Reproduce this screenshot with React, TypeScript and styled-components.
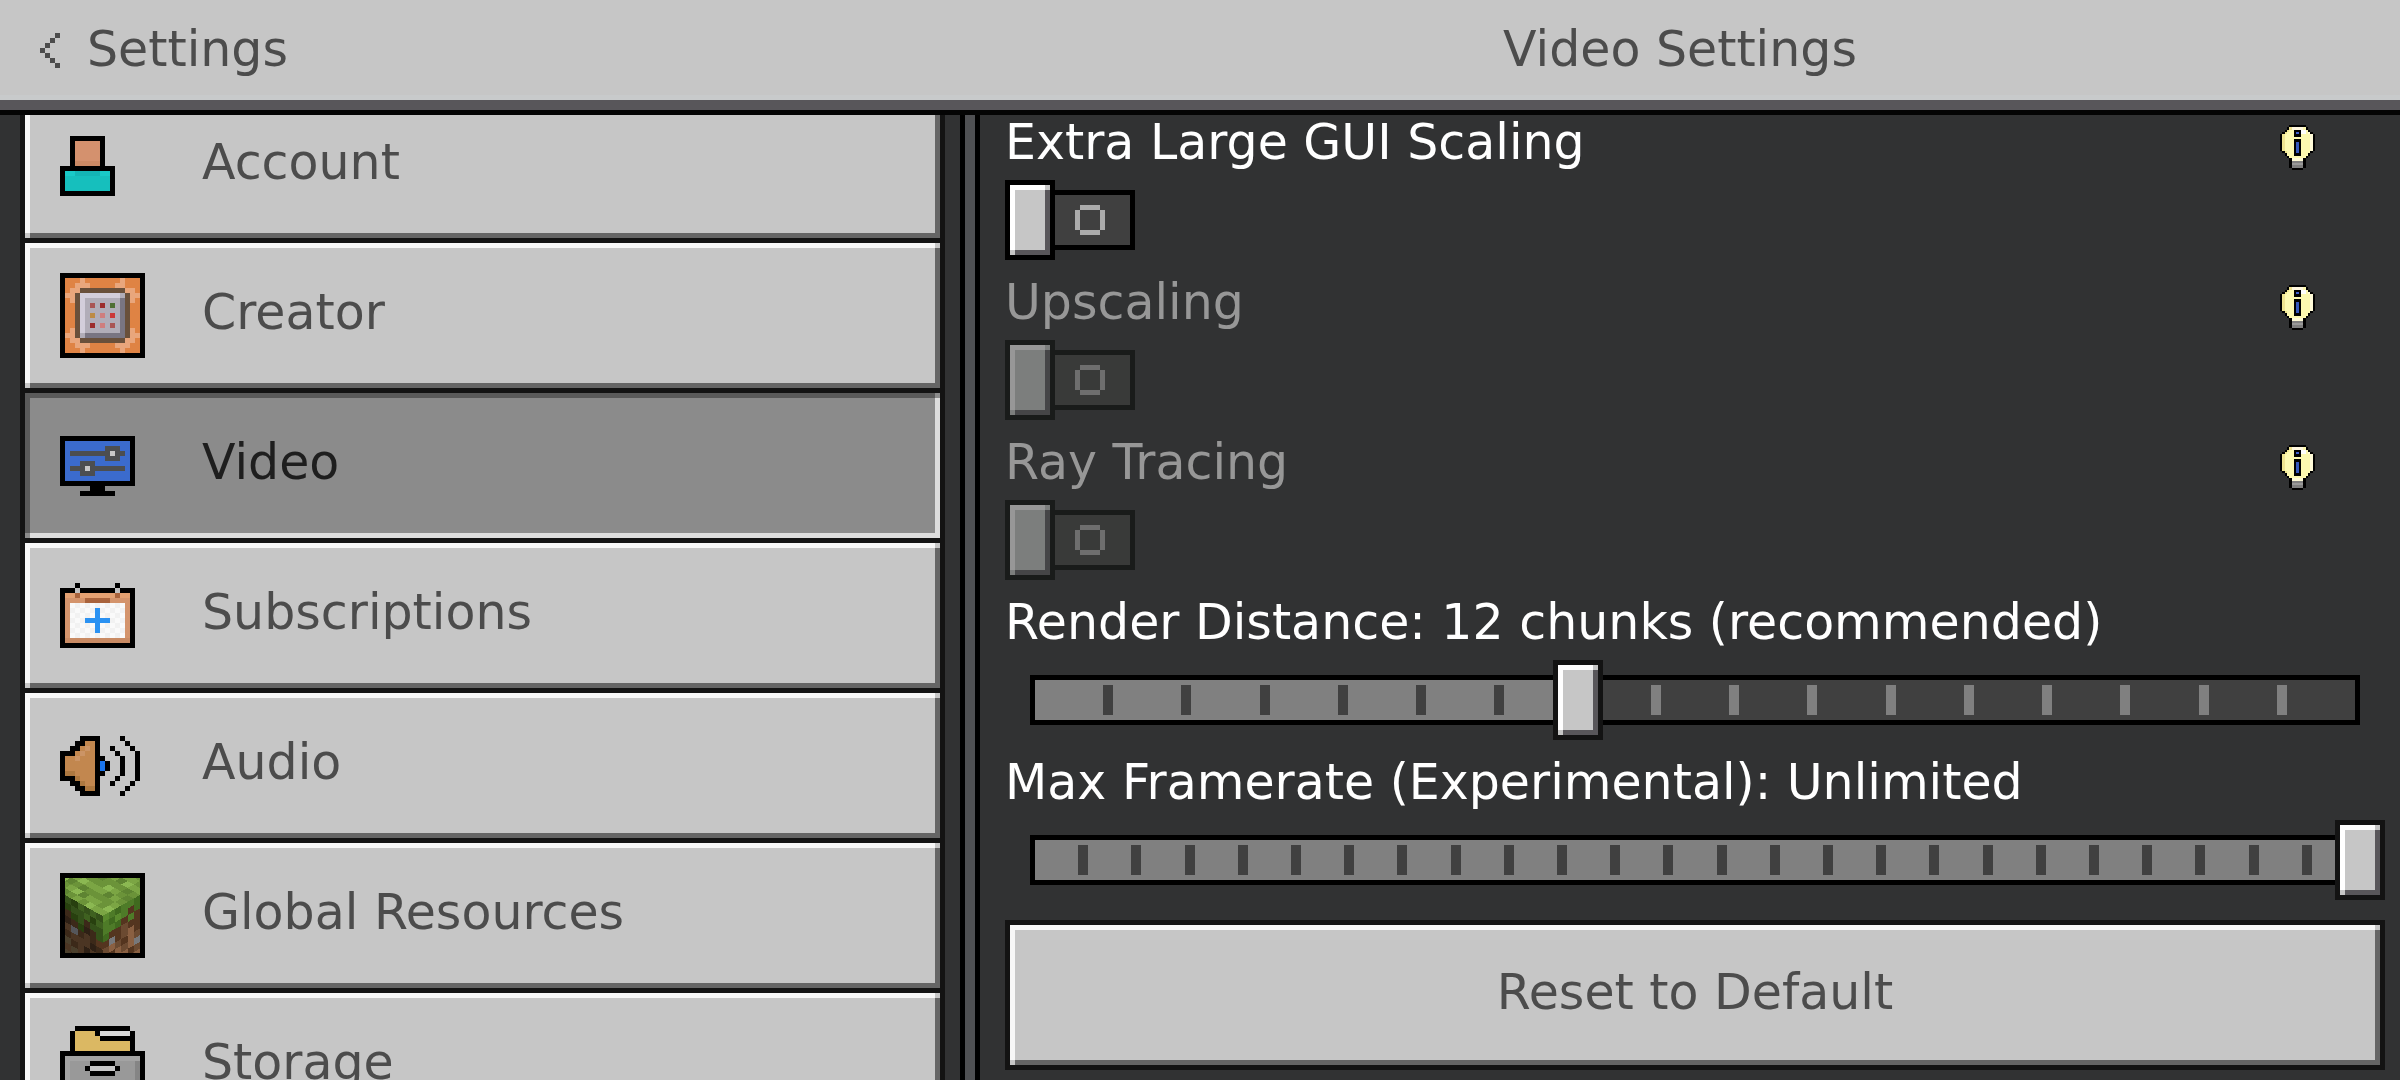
import React, { useLayoutEffect, useRef, useState } from "react";
import styled, { createGlobalStyle, css } from "styled-components";

const GlobalStyle = createGlobalStyle`
  *, *::before, *::after { box-sizing: border-box; }
  body { margin: 0; background: #313233; }
  body, button, input {
    font-family: "DejaVu Sans", Verdana, sans-serif;
    font-size: 49px;
    line-height: 50px;
  }
`;

/* A raised pixel edge: light on the top and left, dark on the bottom and right. */
const bevel = (light: string, face: string, dark: string, corner: string = face) => css`
  background:
    linear-gradient(${corner}, ${corner}) top right / 5px 5px no-repeat,
    linear-gradient(${corner}, ${corner}) bottom left / 5px 5px no-repeat,
    linear-gradient(${light}, ${light}) top / 100% 5px no-repeat,
    linear-gradient(${light}, ${light}) left / 5px 100% no-repeat,
    linear-gradient(${dark}, ${dark}) bottom / 100% 5px no-repeat,
    linear-gradient(${dark}, ${dark}) right / 5px 100% no-repeat,
    ${face};
  background-clip: padding-box;
`;

const Screen = styled.div`
  display: flex;
  flex-direction: column;
  height: 100vh;
  overflow: hidden;
  background: #313233;
`;

const Header = styled.header`
  display: grid;
  grid-template-columns: 2fr 3fr;
  align-items: center;
  flex: none;
  height: 115px;
  padding-bottom: 15px;
  color: #4c4c4c;
  background: linear-gradient(#c6c6c6 0 95px, #c8cacb 95px 100px, #58565a 100px 110px, #040404 110px);
`;

const BackButton = styled.button`
  display: flex;
  align-items: center;
  justify-self: start;
  gap: 27px;
  padding: 0 40px;
  border: 0;
  background: none;
  color: inherit;
`;

const Title = styled.h1`
  margin: 0;
  font-size: 49px;
  font-weight: 400;
  text-align: center;
`;

const Body = styled.div`
  display: grid;
  grid-template-columns: 2fr 3fr;
  flex: 1;
  min-height: 0;
`;

const Sidebar = styled.nav`
  min-height: 0;
  padding: 0 15px 0 20px;
`;

const NavList = styled.div`
  display: flex;
  flex-direction: column;
  gap: 5px;
  height: 100%;
  padding: 5px;
  overflow-y: auto;
  scrollbar-width: none;
  background: #131313;
`;

const NavButton = styled.button<{ $active: boolean }>`
  display: flex;
  align-items: center;
  flex: none;
  gap: 52px;
  height: 145px;
  padding: 0 35px;
  border: 0;
  text-align: left;
  color: ${(p) => (p.$active ? "#1e1e1e" : "#4c4c4c")};
  ${(p) => (p.$active ? bevel("#5a5a5a", "#8b8b8b", "#dcdcdc") : bevel("#f7f7f7", "#c6c6c6", "#656565"))}
`;

const IconBox = styled.span`
  display: flex;
  align-items: center;
  width: 90px;
`;

const NavText = styled.span`
  padding-bottom: 5px;
`;

const Panel = styled.main`
  min-width: 0;
  padding: 0 15px 0 45px;
  overflow: hidden;
  background: linear-gradient(90deg, #000 0 5px, #4f5053 5px 15px, #000 15px 20px, #313233 20px);
`;

const Row = styled.div`
  display: flex;
  flex-direction: column;
  gap: 10px;
  height: 160px;
`;

const RowHead = styled.div<{ $disabled?: boolean }>`
  display: flex;
  align-items: center;
  justify-content: space-between;
  height: 55px;
  padding-right: 70px;
  white-space: nowrap;
  color: ${(p) => (p.$disabled ? "#979797" : "#fff")};
`;

const InfoButton = styled.button`
  display: flex;
  align-self: flex-end;
  padding: 0;
  border: 0;
  background: none;
`;

const ToggleBox = styled.span`
  position: relative;
  display: flex;
  align-items: center;
  width: 130px;
  height: 80px;
`;

const ToggleInput = styled.input`
  position: absolute;
  inset: 0;
  width: 100%;
  height: 100%;
  margin: 0;
  opacity: 0;
`;

const Knob = styled.span<{ $disabled?: boolean }>`
  width: 50px;
  height: 80px;
  border: 5px solid ${(p) => (p.$disabled ? "#191b1a" : "#000")};
  ${(p) => (p.$disabled ? bevel("#979797", "#7c7e7d", "#454547") : bevel("#fff", "#c6c6c6", "#58565a"))}
`;

const ToggleTrack = styled.span<{ $disabled?: boolean; $on: boolean }>`
  display: flex;
  align-items: center;
  order: ${(p) => (p.$on ? -1 : 0)};
  width: 80px;
  height: 60px;
  padding-left: 20px;
  border: 5px solid ${(p) => (p.$disabled ? "#191b1a" : "#000")};
  border-width: ${(p) => (p.$on ? "5px 0 5px 5px" : "5px 5px 5px 0")};
  background: ${(p) => (p.$disabled ? "#393a39" : "#404040")};
  color: ${(p) => (p.$disabled ? "#6e6e6e" : "#acacac")};
`;

const SliderBox = styled.div`
  display: grid;
  align-items: center;
  height: 80px;
  & > * { grid-area: 1 / 1; }
`;

const SliderTrack = styled.div<{ $steps: number; $fill: string; $tick: string }>`
  height: 50px;
  margin: 0 25px;
  border: 5px solid #000;
  background:
    repeating-linear-gradient(
      90deg,
      ${(p) => p.$tick} 0 5px,
      ${(p) => p.$fill} 5px calc(100% / ${(p) => p.$steps} - 5px),
      ${(p) => p.$tick} calc(100% / ${(p) => p.$steps} - 5px) calc(100% / ${(p) => p.$steps})
    ) center / 100% 30px no-repeat border-box,
    ${(p) => p.$fill};
`;

const SliderInput = styled.input`
  width: 100%;
  height: 80px;
  margin: 0;
  appearance: none;
  background: none;
  z-index: 1;
  &::-webkit-slider-runnable-track { height: 80px; background: none; }
  &::-webkit-slider-thumb {
    appearance: none;
    box-sizing: border-box;
    width: 50px;
    height: 80px;
    border: 5px solid #131313;
    border-radius: 0;
    ${bevel("#fff", "#c6c6c6", "#58565a")}
  }
`;

const ResetButton = styled.button`
  width: 100%;
  height: 150px;
  margin-top: 5px;
  padding: 0 0 5px;
  border: 5px solid #131313;
  color: #4c4c4c;
  ${bevel("#f7f7f7", "#c6c6c6", "#656565")}
`;

type Rect = [number, number, number, number, string];

/* Draws whole cells of a small grid; each rect is x, y, width, height, fill. */
function Pixels({ w, h, width, height, rects }: { w: number; h: number; width?: number; height?: number; rects: Rect[] }) {
  return (
    <svg width={width ?? w * 5} height={height ?? h * 5} viewBox={`0 0 ${w} ${h}`} preserveAspectRatio="none" shapeRendering="crispEdges" aria-hidden="true">
      {rects.map(([x, y, rw, rh, fill], i) => (
        <rect key={i} x={x} y={y} width={rw} height={rh} fill={fill} />
      ))}
    </svg>
  );
}

const K = "#000";

const ACCOUNT: Rect[] = [
  [2, 0, 7, 6, K], [0, 6, 11, 6, K], [3, 1, 5, 4, "#d4916e"], [3, 5, 5, 1, "#cb8964"],
  [1, 7, 9, 4, "#16bfbd"], [1, 7, 2, 1, "#19c9c7"], [3, 7, 5, 1, "#14b5b5"], [8, 7, 2, 1, "#19c9c7"],
];

const O = "#df8344";
const P = "#e9a67c";
const CREATOR: Rect[] = [
  [0, 0, 17, 17, K], [1, 1, 15, 15, O],
  [4, 1, 1, 1, P], [3, 2, 3, 1, P], [2, 3, 2, 1, P], [1, 4, 2, 1, P], [2, 5, 1, 1, P],
  [12, 1, 1, 1, P], [11, 2, 2, 1, P], [13, 3, 2, 1, P], [13, 4, 3, 1, P], [14, 5, 1, 1, P], [12, 2, 1, 1, P],
  [2, 11, 1, 1, P], [1, 12, 2, 1, P], [2, 13, 2, 1, P], [3, 14, 3, 1, P], [4, 15, 1, 1, P],
  [14, 11, 1, 1, P], [13, 12, 3, 1, P], [13, 13, 2, 1, P], [11, 14, 3, 1, P], [12, 15, 1, 1, P],
  [4, 3, 9, 1, "#69503b"], [3, 4, 1, 9, "#69503b"], [13, 4, 1, 9, "#69503b"], [4, 13, 9, 1, "#69503b"],
  [4, 4, 9, 9, "#b1adb8"], [4, 4, 8, 1, "#d3cedb"], [4, 4, 1, 8, "#d3cedb"],
  [5, 12, 8, 1, "#797582"], [12, 5, 1, 8, "#797582"],
  [6, 6, 1, 1, "#a95555"], [8, 6, 1, 1, "#9c2d2d"], [10, 6, 1, 1, "#4f6f35"],
  [6, 8, 1, 1, "#bd8b45"], [8, 8, 1, 1, "#cf7e7e"], [10, 8, 1, 1, "#cb3838"],
  [6, 10, 1, 1, "#9c2d2d"], [8, 10, 1, 1, "#cf7e7e"], [10, 10, 1, 1, "#a95555"],
];

const VIDEO: Rect[] = [
  [0, 0, 15, 10, K], [6, 10, 3, 1, K], [4, 11, 7, 1, K], [1, 1, 13, 8, "#3b6bcd"],
  [2, 3, 11, 1, "#4c4e50"], [9, 2, 3, 3, "#4c4e50"], [10, 3, 1, 1, "#c8c8c8"],
  [2, 6, 11, 1, "#4c4e50"], [4, 5, 3, 3, "#4c4e50"], [5, 6, 1, 1, "#c8c8c8"],
];

const SUBSCRIPTIONS: Rect[] = [
  [0, 1, 15, 12, K], [3, 0, 1, 1, K], [11, 0, 1, 1, K], [3, 1, 1, 1, "#c0c0c0"], [11, 1, 1, 1, "#c0c0c0"],
  [1, 2, 13, 10, "#d4946c"], [1, 2, 13, 1, "#e3a071"], [1, 11, 13, 1, "#c98b64"],
  [3, 2, 1, 1, "#a9633c"], [11, 2, 1, 1, "#a9633c"], [5, 3, 5, 1, "#a9633c"],
  [2, 4, 11, 7, "#fafafa"],
  ...Array.from({ length: 77 }, (_, i): Rect => [2 + (i % 11), 4 + Math.floor(i / 11), 1, 1, i % 2 ? "#f2f2f2" : "#fafafa"]),
  [7, 5, 1, 5, "#2b92f2"], [5, 7, 5, 1, "#2b92f2"],
];

const B = "#c2874f";
const AUDIO: Rect[] = [
  [4, 0, 4, 12, K], [3, 1, 1, 10, K], [2, 2, 1, 8, K], [0, 3, 2, 6, K],
  [5, 1, 2, 10, B], [4, 2, 1, 8, B], [3, 3, 1, 6, B], [1, 4, 2, 4, B],
  [5, 2, 1, 1, "#cb9466"], [4, 3, 1, 1, "#cb9466"], [3, 4, 1, 1, "#cb9466"], [1, 7, 2, 1, "#ad7840"], [3, 8, 1, 1, "#ad7840"], [4, 9, 1, 1, "#ad7840"], [5, 10, 2, 1, "#ad7840"],
  [8, 4, 1, 4, K], [9, 5, 1, 2, K], [8, 5, 1, 2, "#1b76ee"],
  [10, 2, 1, 1, K], [11, 3, 1, 1, K], [12, 4, 1, 4, K], [11, 8, 1, 1, K], [10, 9, 1, 1, K],
  [12, 0, 1, 1, K], [13, 1, 1, 1, K], [14, 2, 1, 1, K], [15, 3, 1, 6, K], [14, 9, 1, 1, K], [13, 10, 1, 1, K], [12, 11, 1, 1, K],
];

const STORAGE: Rect[] = [
  [3, 0, 11, 1, K], [2, 1, 13, 4, K], [3, 1, 11, 4, "#dbb863"], [7, 1, 1, 1, K], [8, 1, 6, 1, "#d9d9d9"], [8, 2, 6, 1, K],
  [0, 5, 17, 11, K], [1, 6, 15, 9, "#a3a3a3"], [2, 7, 13, 8, "#999"], [15, 7, 1, 8, "#858585"],
  [6, 7, 5, 3, K], [5, 8, 7, 1, K], [6, 8, 5, 1, "#c8c8c8"],
];

const Y = "#fdf9b0";
const BULB: Rect[] = [
  [4, 0, 7, 14, K], [3, 1, 9, 13, K], [2, 2, 11, 11, K], [1, 3, 13, 9, K], [0, 4, 15, 7, K],
  [4, 1, 7, 14, Y], [3, 2, 9, 11, Y], [2, 3, 11, 9, Y], [1, 4, 13, 7, Y],
  [1, 4, 1, 7, "#efe490"], [2, 3, 1, 1, "#efe490"], [3, 2, 1, 1, "#efe490"], [4, 1, 1, 1, "#efe490"], [2, 11, 1, 1, "#efe490"],
  [5, 1, 5, 1, "#fff8e0"], [9, 2, 2, 2, "#fff"], [13, 4, 1, 7, "#fffbd8"], [12, 3, 1, 1, "#fffbd8"], [5, 14, 5, 1, "#fffbd8"],
  [6, 2, 3, 3, K], [7, 3, 1, 1, "#3f5fd0"], [6, 6, 3, 7, K], [7, 7, 1, 5, "#3558bd"],
  [4, 14, 1, 4, K], [10, 14, 1, 4, K], [5, 15, 5, 3, "#7f7f7f"], [5, 16, 5, 1, "#999"], [5, 18, 5, 1, K],
];

const GRASS_PALETTE: Record<string, string> = {
  a: "#7ba544", b: "#6b9339", c: "#8bb852", d: "#5e8432",
  g: "#34501a", h: "#28400f", i: "#3f6120", j: "#4e7b28", k: "#5a8a2e", l: "#406a1f",
  m: "#3c2919", n: "#2e2015", o: "#4b3523", p: "#4a3f2c", q: "#6b4a31", r: "#8a6042", s: "#54351f", t: "#a3714d", x: "#55565a", y: "#77787b",
};
const GRASS_TOP = ["acabdbacabda", "abbabdabbacb", "cabdabcabdab", "babacbdabbac", "adbabbadcbab", "bcdabdabbdab", "dabcbabdabcb", "abdabcabdbab", "bacbadbabcab", "abbdacbbadab", "cabbabdabcab", "abdabcbabdab"];
const GRASS_LEFT = ["ghigig", "hggihi", "mhgmgg", "nmhnmg", "oxmoms", "mooonm", "pmonoo", "opomno", "pmomnm"];
const GRASS_RIGHT = ["kjljjl", "jlkjsl", "jjlsjs", "lssqss", "sysqrs", "qrqsrq", "rsrqry", "qrsrsq", "tqrsqr", "rqtrqs"];

function GrassIcon() {
  const face = (rows: string[], transform: string) => (
    <g transform={transform}>
      {rows.flatMap((row, y) =>
        [...row].map((c, x) => <rect key={`${x}-${y}`} x={x} y={y} width="1.04" height="1.04" fill={GRASS_PALETTE[c]} />),
      )}
    </g>
  );
  return (
    <svg width="85" height="85" viewBox="-5 -5 85 85" aria-hidden="true">
      <rect x="-5" y="-5" width="85" height="85" fill="#000" />
      <svg x="0" y="0" width="75" height="75" viewBox="0 0 75 75" shapeRendering="crispEdges">
        {face(GRASS_TOP, "matrix(6.25 -3.5 -6.25 -3.5 37.5 38)")}
        {face(GRASS_LEFT, "matrix(6.25 3.5 0 6.7 0 17)")}
        {face(GRASS_RIGHT, "matrix(6.25 -3.5 0 6.7 37.5 38)")}
      </svg>
    </svg>
  );
}

const SECTIONS = [
  { name: "Account", icon: <Pixels w={11} h={12} rects={ACCOUNT} /> },
  { name: "Creator", icon: <Pixels w={17} h={17} rects={CREATOR} /> },
  { name: "Video", icon: <Pixels w={15} h={12} rects={VIDEO} /> },
  { name: "Subscriptions", icon: <Pixels w={15} h={13} rects={SUBSCRIPTIONS} /> },
  { name: "Audio", icon: <Pixels w={16} h={12} rects={AUDIO} /> },
  { name: "Global Resources", icon: <GrassIcon /> },
  { name: "Storage", icon: <Pixels w={17} h={16} rects={STORAGE} /> },
];

function ToggleRow({ id, label, disabled }: { id: string; label: string; disabled?: boolean }) {
  const [on, setOn] = useState(false);
  return (
    <Row>
      <RowHead $disabled={disabled}>
        <label htmlFor={id}>{label}</label>
        <InfoButton aria-label={`About ${label}`}>
          <Pixels w={15} h={19} width={35} height={45} rects={BULB} />
        </InfoButton>
      </RowHead>
      <ToggleBox>
        <Knob $disabled={disabled} />
        <ToggleTrack $disabled={disabled} $on={on}>
          <svg width="30" height="30" viewBox="0 0 6 6" fill="currentColor" shapeRendering="crispEdges" aria-hidden="true">
            {on ? <path d="M2 0h2v6H2z" /> : <path d="M1 0h4v1H1zM0 1h1v4H0zM5 1h1v4H5zM1 5h4v1H1z" />}
          </svg>
        </ToggleTrack>
        <ToggleInput id={id} type="checkbox" role="switch" checked={on} disabled={disabled} onChange={(e) => setOn(e.target.checked)} />
      </ToggleBox>
    </Row>
  );
}

function SliderRow({ id, steps, initial, describe }: { id: string; steps: number; initial: number; describe: (v: number) => string }) {
  const [value, setValue] = useState(initial);
  return (
    <Row>
      <RowHead>
        <label htmlFor={id}>{describe(value)}</label>
      </RowHead>
      <SliderBox>
        <SliderTrack $steps={steps} $fill="#404040" $tick="#808080" />
        <SliderTrack $steps={steps} $fill="#808080" $tick="#404040" style={{ clipPath: `inset(0 ${100 - (value / steps) * 100}% 0 0)` }} />
        <SliderInput id={id} type="range" min={0} max={steps} value={value} onChange={(e) => setValue(Number(e.target.value))} />
      </SliderBox>
    </Row>
  );
}

export default function App() {
  const [active, setActive] = useState("Video");
  const list = useRef<HTMLDivElement>(null);

  useLayoutEffect(() => {
    if (list.current) list.current.scrollTop = 27;
  }, []);

  return (
    <Screen>
      <GlobalStyle />
      <Header>
        <BackButton>
          <svg width="20" height="35" viewBox="0 0 4 7" fill="currentColor" shapeRendering="crispEdges" aria-hidden="true">
            <path d="M3 0h1v1H3zM2 1h1v1H2zM1 2h1v1H1zM0 3h1v1H0zM1 4h1v1H1zM2 5h1v1H2zM3 6h1v1H3z" />
          </svg>
          Settings
        </BackButton>
        <Title>Video Settings</Title>
      </Header>
      <Body>
        <Sidebar>
          <NavList ref={list}>
            {SECTIONS.map((s) => (
              <NavButton key={s.name} $active={s.name === active} onClick={() => setActive(s.name)}>
                <IconBox>{s.icon}</IconBox>
                <NavText>{s.name}</NavText>
              </NavButton>
            ))}
          </NavList>
        </Sidebar>
        <Panel>
          <ToggleRow id="gui-scaling" label="Extra Large GUI Scaling" />
          <ToggleRow id="upscaling" label="Upscaling" disabled />
          <ToggleRow id="ray-tracing" label="Ray Tracing" disabled />
          <SliderRow id="render-distance" steps={17} initial={7} describe={(v) => `Render Distance: ${v + 5} chunks (recommended)`} />
          <SliderRow id="max-framerate" steps={25} initial={25} describe={(v) => `Max Framerate (Experimental): ${v === 25 ? "Unlimited" : v * 10}`} />
          <ResetButton>Reset to Default</ResetButton>
        </Panel>
      </Body>
    </Screen>
  );
}
